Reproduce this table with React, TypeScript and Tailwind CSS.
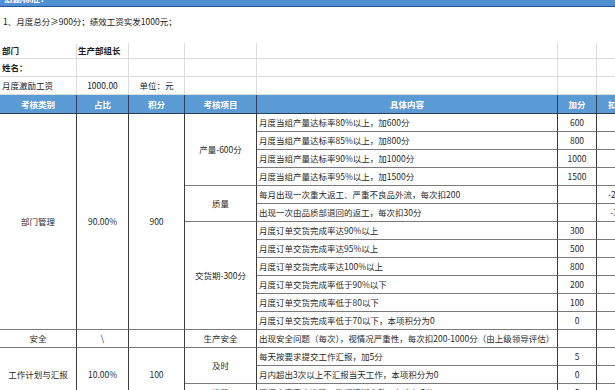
import React from "react";

const font = { fontFamily: '"Noto Sans CJK SC", "DejaVu Sans", sans-serif' };

type R = { text: string; add?: string; minus?: string };

const rows: R[] = [
  { text: "月度当组产量达标率80%以上，加600分", add: "600" },
  { text: "月度当组产量达标率85%以上，加800分", add: "800" },
  { text: "月度当组产量达标率90%以上，加1000分", add: "1000" },
  { text: "月度当组产量达标率95%以上，加1500分", add: "1500" },
  { text: "每月出现一次重大返工、严重不良品外流，每次扣200", minus: "-200" },
  { text: "出现一次由品质部退回的返工，每次扣30分", minus: "-30" },
  { text: "月度订单交货完成率达90%以上", add: "300" },
  { text: "月度订单交货完成率达95%以上", add: "500" },
  { text: "月度订单交货完成率达100%以上", add: "800" },
  { text: "月度订单交货完成率低于90%以下", add: "200" },
  { text: "月度订单交货完成率低于80以下", add: "100" },
  { text: "月度订单交货完成率低于70以下，本项积分为0", add: "0" },
];

const cell =
  "border-r border-b border-r-[#3c3c3c] border-b-[#7a7a7a] flex items-center text-[8.5px] text-[#2a2a2a] leading-none overflow-hidden whitespace-nowrap";
const center = cell + " justify-center";
const left = cell + " justify-start pl-[2px]";

function Row({ r }: { r: R }) {
  return (
    <>
      <div className={left}>{r.text}</div>
      <div className={center}>{r.add ?? ""}</div>
      <div className={center}>{r.minus ?? ""}</div>
    </>
  );
}

export default function App() {
  const topCell =
    "border-r border-b border-[#dcdcdc] flex items-center text-[8.5px] text-[#222] leading-none whitespace-nowrap";
  const head =
    "border-r border-[#2f3f55] flex items-center justify-center text-white font-bold text-[8.5px] leading-none whitespace-nowrap";
  return (
    <div className="w-[615px] h-[390px] overflow-hidden bg-white" style={font}>
      {/* top bar */}
      <div className="h-[7px] bg-[#4f8fd3] border-b border-[#24558c] overflow-hidden">
        <div className="-mt-[6px] pl-[4px] text-[9px] font-bold text-white leading-[10px]">激励标准：</div>
      </div>
      <div className="h-[36px] pt-[8px] pl-[3px] text-[8.5px] text-[#222] leading-[12px]">
        1、月度总分≥900分；绩效工资实发1000元；
      </div>

      <div className="w-[660px]">
        {/* top info grid */}
        <div className="grid grid-cols-[77px_52px_56px_72px_301px_39px_40px_23px] grid-rows-[16px_18px_18px]">
          <div className={topCell + " font-bold pl-[2px]"}>部门</div>
          <div className={topCell + " font-bold pl-[1px]"}>生产部组长</div>
          <div className={topCell}></div>
          <div className={topCell}></div>
          <div className={topCell}></div>
          <div className={topCell}></div>
          <div className={topCell}></div>
          <div className={topCell}></div>

          <div className={topCell + " font-bold pl-[2px]"}>姓名：</div>
          <div className={topCell}></div>
          <div className={topCell}></div>
          <div className={topCell}></div>
          <div className={topCell}></div>
          <div className={topCell}></div>
          <div className={topCell}></div>
          <div className={topCell}></div>

          <div className={topCell + " pl-[2px]"}>月度激励工资</div>
          <div className={topCell + " justify-center"}>1000.00</div>
          <div className={topCell + " justify-center"}>单位：元</div>
          <div className={topCell}></div>
          <div className={topCell}></div>
          <div className={topCell}></div>
          <div className={topCell}></div>
          <div className={topCell}></div>
        </div>

        {/* header */}
        <div className="grid grid-cols-[77px_52px_56px_72px_301px_39px_40px_23px] h-[19px] bg-[#5b9bd5] border-b border-[#2f3f55]">
          <div className={head}>考核类别</div>
          <div className={head}>占比</div>
          <div className={head}>积分</div>
          <div className={head}>考核项目</div>
          <div className={head}>具体内容</div>
          <div className={head}>加分</div>
          <div className={head}>扣分</div>
          <div className={head}></div>
        </div>

        {/* body */}
        <div className="grid grid-cols-[77px_52px_56px_72px_301px_39px_40px_23px] auto-rows-[18px]">
          <div className={center + " row-span-12"}>部门管理</div>
          <div className={center + " row-span-12"}>90.00%</div>
          <div className={center + " row-span-12"}>900</div>
          <div className={center + " row-span-4"}>产量-600分</div>
          <Row r={rows[0]} />
          <div className={cell + " row-span-16"}></div>
          <Row r={rows[1]} />
          <Row r={rows[2]} />
          <Row r={rows[3]} />
          <div className={center + " row-span-2"}>质量</div>
          <Row r={rows[4]} />
          <Row r={rows[5]} />
          <div className={center + " row-span-6"}>交货期-300分</div>
          <Row r={rows[6]} />
          <Row r={rows[7]} />
          <Row r={rows[8]} />
          <Row r={rows[9]} />
          <Row r={rows[10]} />
          <Row r={rows[11]} />

          <div className={center}>安全</div>
          <div className={center}>\</div>
          <div className={center}></div>
          <div className={center}>生产安全</div>
          <div className={left}>出现安全问题（每次），视情况严重性，每次扣200-1000分（由上级领导评估）</div>
          <div className={center}></div>
          <div className={center}></div>

          <div className={center + " row-span-3"}>工作计划与汇报</div>
          <div className={center + " row-span-3"}>10.00%</div>
          <div className={center + " row-span-3"}>100</div>
          <div className={center + " row-span-2"}>及时</div>
          <Row r={{ text: "每天按要求提交工作汇报，加5分", add: "5" }} />
          <Row r={{ text: "月内超出3次以上不汇报当天工作，本项积分为0", add: "0" }} />
          <div className={center}>准确</div>
          <Row r={{ text: "汇报内容真实准确，数据清晰完整，每次加5分", add: "5" }} />
        </div>
      </div>
    </div>
  );
}
